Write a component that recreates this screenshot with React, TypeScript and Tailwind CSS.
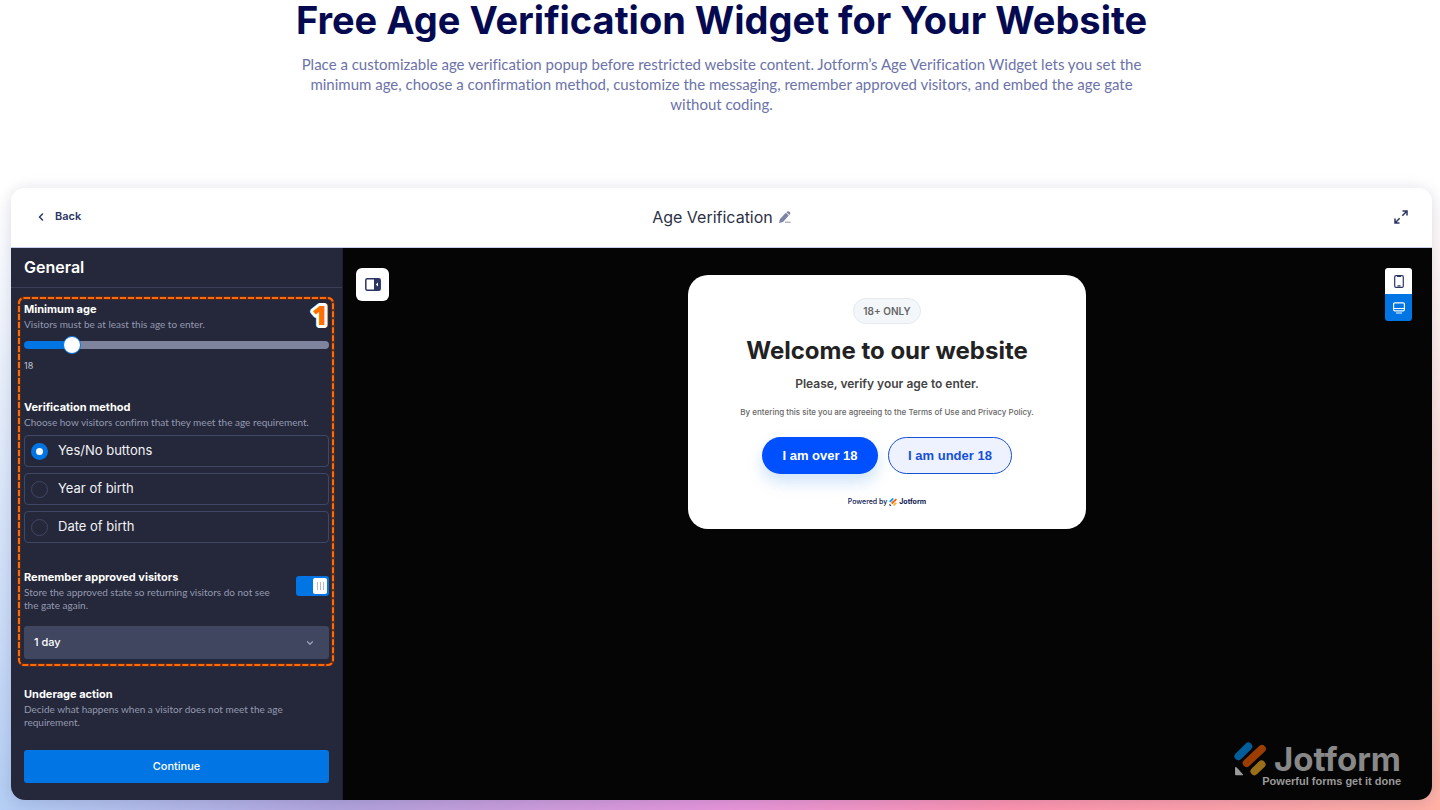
import React, { useState } from 'react';
import { ChevronDown, ChevronLeft } from 'lucide-react';

const methods = ['Yes/No buttons', 'Year of birth', 'Date of birth'];

const JotformMark = ({ className, corner }: { className: string; corner: string }) => (
  <svg viewBox="0 0 94 100" className={className} fill="none" strokeLinecap="round" strokeWidth="23" aria-hidden="true">
    <path d="M13 42 42 13" stroke="#0099ff" />
    <path d="M37 62 82 20" stroke="#ff6100" />
    <path d="M60 86 81 66" stroke="#ffb629" />
    <path d="M3 77v18q0 3 3 3h19q4 0 1-3L8 75q-5-3-5 2Z" fill={corner} />
  </svg>
);

const Field = ({ title, text, className }: { title: string; text: string; className?: string }) => (
  <div className={className}>
    <h3 className="text-[11px] leading-4 font-bold text-white">{title}</h3>
    <p className="mt-px font-[Lato,sans-serif] text-[10px] leading-[13px] text-[#9399b0] [font-variant-ligatures:none]">{text}</p>
  </div>
);

const TopBar = () => (
  <header className="grid h-[60px] grid-cols-3 items-center border-b border-[#c8ceed] bg-white px-6 pb-[2px]">
    <button className="flex items-center gap-2 justify-self-start text-[11px] font-semibold text-[#2c3563]">
      <ChevronLeft className="h-3 w-3" strokeWidth={3} />
      Back
    </button>
    <div className="flex items-center gap-[6px] justify-self-center">
      <h2 className="text-base text-[#2b3245]">Age Verification</h2>
      <button aria-label="Rename">
        <svg viewBox="0 0 12 12" className="h-3 w-3" fill="#7c83a6">
          <path d="M0 12 1 8 6.800 1.800 9.800 4.600 4 11Z" />
          <path d="M7.500 1.100q1.500-1.600 3-.3t.1 3l-.2.200L7.400 1.200Z" />
          <path d="M6 10.500h5.500V12H6Z" opacity=".6" />
        </svg>
      </button>
    </div>
    <button aria-label="Full screen" className="justify-self-end">
      <svg viewBox="0 0 14 14" className="h-[14px] w-[14px]" fill="none" stroke="#2c3563" strokeWidth="1.500">
        <path d="M8.500 1H13v4.500M13 1 8.300 5.700M5.500 13H1V8.500M1 13l4.700-4.700" />
      </svg>
    </button>
  </header>
);

const Sidebar = () => {
  const [age, setAge] = useState(18);
  const [method, setMethod] = useState(methods[0]);
  const [remember, setRemember] = useState(true);
  const fill = ((age - 5) / 95) * 100;

  return (
    <aside className="flex w-[332px] shrink-0 flex-col border-r border-[#1b1e2e] bg-[#25283a]">
      <h2 className="flex h-10 items-center border-b border-[#3a3f57] px-[13px] pb-[2px] text-base font-semibold text-white">
        General
      </h2>

      <div className="relative mt-[9px] px-[13px] pt-1 pb-[5px]">
        <svg className="pointer-events-none absolute top-0 left-[7px] h-full w-[314px] overflow-visible" fill="none" aria-hidden="true">
          <rect x="1" y="1" width="100%" height="100%" rx="5" stroke="#6b2c0c" strokeWidth="3" />
          <rect x="1" y="1" width="100%" height="100%" rx="5" stroke="#ff6a0a" strokeWidth="2" strokeDasharray="6 2" />
        </svg>
        <svg className="pointer-events-none absolute top-1 right-[10px] h-8 w-[22px] overflow-visible">
          <text
            x="2"
            y="24"
            fontSize="27"
            fontWeight="900"
            fill="#ff6f00"
            stroke="white"
            strokeWidth="6"
            strokeLinejoin="round"
            paintOrder="stroke"
            className="font-['Open_Sans',sans-serif]"
          >
            1
          </text>
        </svg>

        <Field title="Minimum age" text="Visitors must be at least this age to enter." />
        <input
          type="range"
          min={5}
          max={100}
          value={age}
          onChange={(e) => setAge(Number(e.target.value))}
          aria-label="Minimum age"
          className="mt-[5px] block h-[18px] w-full appearance-none bg-transparent [&::-webkit-slider-runnable-track]:h-2 [&::-webkit-slider-runnable-track]:rounded-full [&::-webkit-slider-runnable-track]:bg-[linear-gradient(90deg,#0075e3_var(--fill),#7e849e_var(--fill))] [&::-webkit-slider-thumb]:-mt-[5px] [&::-webkit-slider-thumb]:h-[18px] [&::-webkit-slider-thumb]:w-[18px] [&::-webkit-slider-thumb]:appearance-none [&::-webkit-slider-thumb]:rounded-full [&::-webkit-slider-thumb]:border [&::-webkit-slider-thumb]:border-[#0075e3] [&::-webkit-slider-thumb]:bg-white"
          style={{ '--fill': `${fill}%` } as React.CSSProperties}
        />
        <p className="mt-1 text-[9px] leading-4 text-[#c0c4d4]">{age}</p>

        <Field className="mt-[25px]" title="Verification method" text="Choose how visitors confirm that they meet the age requirement." />
        <div className="mt-[6px] flex flex-col gap-[6px]">
          {methods.map((m) => (
            <label key={m} className="flex h-8 items-center gap-[10px] rounded-sm border border-[#404766] px-[6px] text-[13px] text-[#f2f3f7]">
              <input
                type="radio"
                name="method"
                checked={method === m}
                onChange={() => setMethod(m)}
                className="h-[17px] w-[17px] appearance-none rounded-full border border-[#404766] checked:border-[5px] checked:border-[#0075e3] checked:bg-white"
              />
              {m}
            </label>
          ))}
        </div>

        <div className="mt-[26px] flex items-start justify-between">
          <Field className="w-[262px]" title="Remember approved visitors" text="Store the approved state so returning visitors do not see the gate again." />
          <label className="relative mt-[7px] block h-5 w-[33px]">
            <input
              type="checkbox"
              checked={remember}
              onChange={() => setRemember(!remember)}
              aria-label="Remember approved visitors"
              className="peer block h-5 w-[33px] appearance-none rounded-[3px] bg-[#5a607c] checked:bg-[#0075e3]"
            />
            <span className="pointer-events-none absolute top-[2px] left-[2px] flex h-4 w-[14px] items-center justify-center gap-[2px] rounded-xs bg-white peer-checked:left-[17px]">
              <i className="h-2 w-px bg-[#b5b9c9]" />
              <i className="h-2 w-px bg-[#b5b9c9]" />
              <i className="h-2 w-px bg-[#b5b9c9]" />
            </span>
          </label>
        </div>
        <div className="relative mt-[14px]">
          <select aria-label="Remember for" className="h-[33px] w-full appearance-none rounded-[3px] bg-[#40465f] px-[10px] text-[11px] font-medium text-white">
            <option>1 day</option>
            <option>7 days</option>
            <option>30 days</option>
          </select>
          <ChevronDown className="pointer-events-none absolute top-3 right-[14px] h-[10px] w-[10px] text-[#9ba1b8]" strokeWidth={3} />
        </div>
      </div>

      <Field className="mt-[22px] px-[13px]" title="Underage action" text="Decide what happens when a visitor does not meet the age requirement." />
      <div className="mt-auto px-[13px] pb-[17px]">
        <button className="h-[33px] w-full rounded-[3px] bg-[#0075e3] text-[11px] font-medium text-white">Continue</button>
      </div>
    </aside>
  );
};

const AgeGate = () => (
  <div className="flex w-[398px] flex-col items-center rounded-[20px] bg-white pt-[23px] pb-[19px]">
    <span className="rounded-full border border-[#e6eaee] bg-[#f3f7fa] px-[9px] py-1 text-[10px] leading-4 font-semibold text-[#666]">18+ ONLY</span>
    <h2 className="mt-[11px] text-2xl leading-8 font-bold text-[#222]">Welcome to our website</h2>
    <p className="mt-[9px] text-xs leading-4 font-semibold text-[#444]">Please, verify your age to enter.</p>
    <p className="mt-3 text-[8px] leading-4 font-medium text-[#666]">
      By entering this site you are agreeing to the Terms of Use and Privacy Policy.
    </p>
    <div className="mt-[17px] flex gap-[10px] font-['Liberation_Sans',sans-serif] text-[13px] font-bold">
      <button className="h-[37px] w-[116px] rounded-full bg-[#0050ff] text-white shadow-[0_8px_16px_#0075e333]">I am over 18</button>
      <button className="h-[37px] w-[124px] rounded-full border border-[#1550d8] bg-[#eef2fe] text-[#1550d8]">I am under 18</button>
    </div>
    <p className="mt-5 flex items-center text-[7px] leading-4 font-medium text-[#0a1551]">
      Powered by
      <JotformMark className="mx-[2px] h-2 w-2" corner="#0a1551" />
      <b>Jotform</b>
    </p>
  </div>
);

const Preview = () => (
  <section className="relative flex flex-1 items-start justify-between bg-[#050505] pt-5 pr-5 pl-[13px]">
    <button aria-label="Toggle panel" className="flex h-[33px] w-[33px] items-center justify-center rounded-md bg-white">
      <svg viewBox="0 0 16 13" className="h-[13px] w-4" aria-hidden="true">
        <rect x=".8" y=".8" width="14.400" height="11.400" rx="1.500" fill="white" stroke="#2c3563" strokeWidth="1.500" />
        <path d="M9 1h6v11H9Z" fill="#2c3563" />
        <path d="M13 4.500v4L10.800 6.500Z" fill="white" />
      </svg>
    </button>
    <div className="mt-[7px]">
      <AgeGate />
    </div>
    <div className="flex w-[27px] flex-col overflow-hidden rounded-[3px]">
      <button aria-label="Phone preview" className="flex h-[26px] items-center justify-center bg-white">
        <svg viewBox="0 0 10 13" className="h-[13px] w-[10px]" fill="none" stroke="#2c3563" aria-hidden="true">
          <rect x=".7" y=".7" width="8.600" height="11.600" rx="1.300" strokeWidth="1.200" />
          <path d="M3 1.500h4M3.500 10.800h3" strokeWidth="1.200" />
        </svg>
      </button>
      <button aria-label="Desktop preview" className="flex h-[27px] items-center justify-center bg-[#0075e3]">
        <svg viewBox="0 0 12 12" className="h-3 w-3" fill="none" stroke="white" aria-hidden="true">
          <rect x=".6" y=".8" width="10.800" height="8" rx="1.300" strokeWidth="1.200" />
          <path d="M1 6.500h10M3 11h6" strokeWidth="1.200" />
        </svg>
      </button>
    </div>

    <div className="absolute right-[31px] bottom-[13px] flex flex-col items-end">
      <div className="flex h-8 items-center gap-2">
        <JotformMark className="h-[34px] w-8 opacity-60" corner="white" />
        <b className="text-[33px] leading-8 text-[#888]">Jotform</b>
      </div>
      <span className="font-['Liberation_Sans',sans-serif] text-[11px] leading-3 font-bold text-[#999]">
        Powerful forms get it done
      </span>
    </div>
  </section>
);

const App = () => {
  return (
    <main className="flex min-h-screen flex-col bg-white bg-[linear-gradient(180deg,#fff_0,#fff_200px,#ffffff00_100%),linear-gradient(90deg,#b4cef4_0%,#b3a4dd_24%,#e897dc_50%,#ff95b0_70%,#ffb0a5_100%)] pr-2 pb-[10px] pl-[11px] font-[Inter,sans-serif]">
      <h1 className="text-center text-[38px] leading-10 font-bold text-[#050a50]">Free Age Verification Widget for Your Website</h1>
      <p className="mx-auto mt-[14px] max-w-[860px] text-center font-[Lato,sans-serif] text-[15px] leading-5 text-[#6c73a8] [font-variant-ligatures:none]">
        Place a customizable age verification popup before restricted website content. Jotform’s Age Verification Widget lets you set the
        minimum age, choose a confirmation method, customize the messaging, remember approved visitors, and embed the age gate
        without coding.
      </p>
      <div className="mt-[74px] flex flex-1 flex-col overflow-hidden rounded-[14px] shadow-[0_2px_16px_#0a155126]">
        <TopBar />
        <div className="flex flex-1">
          <Sidebar />
          <Preview />
        </div>
      </div>
    </main>
  );
};

export default App;
